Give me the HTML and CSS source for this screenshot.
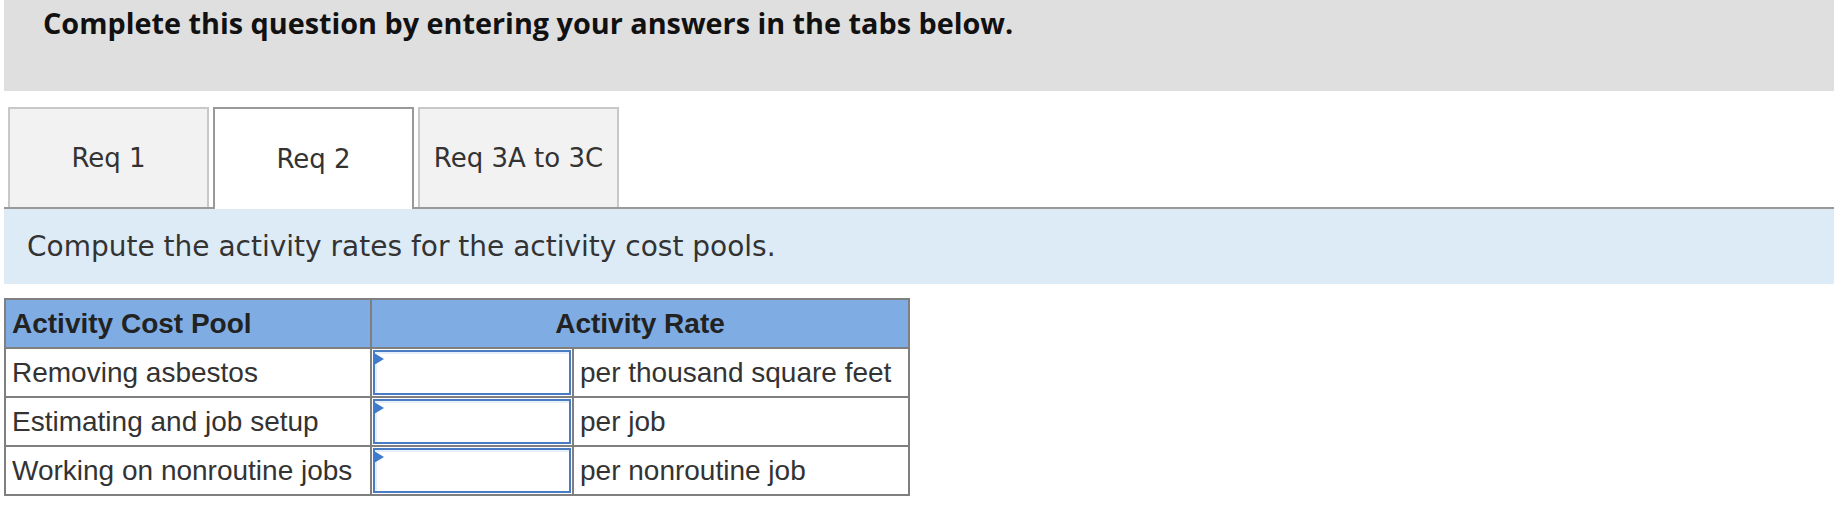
FILE: index.html
```html
<!DOCTYPE html>
<html lang="en">
<head>
<meta charset="utf-8">
<title>Activity rates</title>
<link rel="stylesheet" href="styles.css">
</head>
<body>
<div class="page">
  <div class="banner">
    <h1 class="banner-title">Complete this question by entering your answers in the tabs below.</h1>
  </div>
  <div class="tabs">
    <div class="tab">Req 1</div>
    <div class="tab tab-active">Req 2</div>
    <div class="tab">Req 3A to 3C</div>
  </div>
  <div class="instructions">Compute the activity rates for the activity cost pools.</div>
  <table class="rates">
    <thead>
      <tr>
        <th class="col-pool">Activity Cost Pool</th>
        <th class="col-rate" colspan="2">Activity Rate</th>
      </tr>
    </thead>
    <tbody>
      <tr>
        <td class="pool">Removing asbestos</td>
        <td class="input-cell"><div class="answer"><span class="flag"></span></div></td>
        <td class="unit">per thousand square feet</td>
      </tr>
      <tr>
        <td class="pool">Estimating and job setup</td>
        <td class="input-cell"><div class="answer"><span class="flag"></span></div></td>
        <td class="unit">per job</td>
      </tr>
      <tr>
        <td class="pool">Working on nonroutine jobs</td>
        <td class="input-cell"><div class="answer"><span class="flag"></span></div></td>
        <td class="unit">per nonroutine job</td>
      </tr>
    </tbody>
  </table>
</div>
</body>
</html>
```
FILE: styles.css
```css
html, body {
  margin: 0;
  padding: 0;
  background: #ffffff;
}

.page {
  margin: 0 10px 0 4px;
}

.banner {
  background: #dfdfdf;
  height: 91px;
  box-sizing: border-box;
  padding: 4px 0 0 39px;
}

.banner-title {
  margin: 0;
  font-family: "Open Sans", Lato, sans-serif;
  font-weight: 700;
  font-size: 28.8px;
  line-height: 38px;
  color: #111111;
}

.tabs {
  display: flex;
  gap: 4px;
  margin-top: 16px;
  padding-left: 4px;
  border-bottom: 2px solid #999999;
  height: 100px;
}

.tab {
  width: 201px;
  height: 100px;
  box-sizing: border-box;
  background: #f2f2f2;
  border: 2px solid #c8c8c8;
  border-bottom: none;
  display: flex;
  align-items: center;
  justify-content: center;
  font-family: "DejaVu Sans", Verdana, sans-serif;
  font-size: 26px;
  color: #333333;
}

.tab-active {
  background: #ffffff;
  border-color: #999999;
  height: 102px;
  position: relative;
  z-index: 1;
}

.instructions {
  background: #ddebf7;
  height: 75px;
  box-sizing: border-box;
  padding: 0 0 0 23px;
  display: flex;
  align-items: center;
  font-family: "DejaVu Sans", Verdana, sans-serif;
  font-size: 28px;
  color: #333333;
}

.rates {
  margin-top: 14px;
  border-collapse: collapse;
  width: 906px;
  font-family: "Liberation Sans", Arial, sans-serif;
  font-size: 28px;
  color: #333333;
}

.rates th,
.rates td {
  border: 2px solid #7f7f7f;
  height: 49px;
  box-sizing: border-box;
  padding: 0 6px;
  white-space: nowrap;
}

.rates th {
  background: #7fade3;
  font-weight: 700;
  color: #222222;
}

.col-pool {
  text-align: left;
  width: 366px;
}

.col-rate {
  text-align: center;
}

.rates td.input-cell {
  padding: 1px;
  width: 202px;
}

.answer {
  position: relative;
  height: 45px;
  box-sizing: border-box;
  border: 2px solid #4a7cc3;
  background: #ffffff;
  box-shadow: inset 2px 2px 0 #e6effa;
}

.flag {
  position: absolute;
  left: -1px;
  top: 1px;
  width: 0;
  height: 0;
  border-top: 6px solid transparent;
  border-bottom: 6px solid transparent;
  border-left: 10px solid #3f7bcc;
}

.unit {
  text-align: left;
}
```
